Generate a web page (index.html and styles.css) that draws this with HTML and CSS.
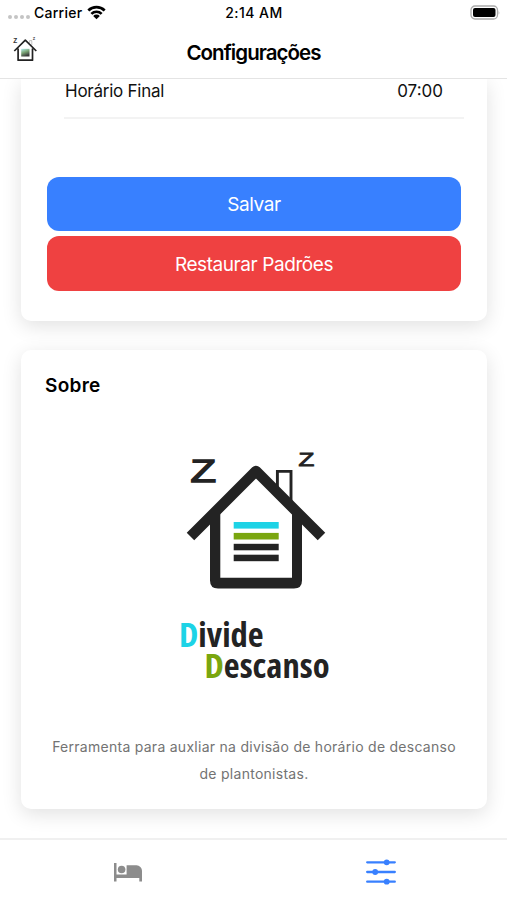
FILE: index.html
```html
<!DOCTYPE html>
<html lang="pt-BR">
<head>
    <meta charset="UTF-8">
    <meta name="viewport" content="width=device-width, initial-scale=1.0">
    <title>Configurações - Divide Descanso</title>
    <link rel="stylesheet" href="styles.css">
</head>
<body>
    <header class="header">
        <div class="status">
            <div class="carrier">
                <span class="signal"><i></i><i></i><i></i><i></i></span>
                <span class="carrier-name">Carrier</span>
                <svg class="wifi" width="19" height="15" viewBox="0 0 20 15">
                    <g fill="none" stroke="#000" stroke-width="2.8">
                        <path d="M1.4 5.4a12.3 12.3 0 0 1 17.2 0"/>
                        <path d="M4.6 8.9a7.7 7.7 0 0 1 10.8 0"/>
                    </g>
                    <path d="M10 14.6 6.5 11.2a4.9 4.9 0 0 1 7 0z"/>
                </svg>
            </div>
            <span class="time">2:14 AM</span>
            <svg class="battery" width="30" height="16" viewBox="0 0 30 16">
                <rect x="1" y="1" width="26.5" height="13" rx="4" fill="#fff" stroke="#aaa" stroke-width="1.3"/>
                <rect x="3" y="3" width="22.5" height="9" rx="2"/>
                <path d="M28.6 5.5q1.4 2 0 4z" fill="#aaa"/>
            </svg>
        </div>
        <div class="toolbar">
            <svg class="mini-logo" width="26" height="26" viewBox="0 0 26 26">
                <defs>
                    <linearGradient id="mini" x1="0" y1="0" x2="0.4" y2="1">
                        <stop offset="0" stop-color="#b5eef2"/>
                        <stop offset=".5" stop-color="#7da878"/>
                        <stop offset="1" stop-color="#3c3c3c"/>
                    </linearGradient>
                </defs>
                <text class="mini-zed" x="1.2" y="6.5" font-size="6.5">Z</text>
                <text class="mini-zed" x="20.8" y="4" font-size="4">Z</text>
                <path d="M17.6 7V4.6h2.2V9" fill="none" stroke="#999" stroke-width=".6"/>
                <path d="M2.3 15 13.3 4.2l11 10.8M6.1 12.5v11.7H20.5V12.5" fill="none" stroke="#222" stroke-width="1.7" stroke-linejoin="round"/>
                <rect x="9.2" y="12.8" width="8.3" height="7.7" fill="url(#mini)"/>
            </svg>
            <h1 class="title">Configurações</h1>
        </div>
    </header>

    <main class="content">
        <section class="card card-form">
            <div class="item">
                <span class="item-label">Horário Final</span>
                <span class="item-value">07:00</span>
            </div>
            <div class="buttons">
                <button class="btn btn-primary">Salvar</button>
                <button class="btn btn-danger">Restaurar Padrões</button>
            </div>
        </section>

        <section class="card card-about">
            <h2 class="about-title">Sobre</h2>
            <div class="logo">
                <svg class="logo-house" width="180" height="160" viewBox="0 0 180 160">
                    <text class="zed" x="25.4" y="41.5" font-size="31" textLength="25.6" lengthAdjust="spacingAndGlyphs">Z</text>
                    <text class="zed zed-small" x="133.5" y="25.5" font-size="18.8" textLength="15.8" lengthAdjust="spacingAndGlyphs">Z</text>
                    <!-- casa -->
                    <path d="M112.4 50V31.4H126V63" fill="none" stroke="#232323" stroke-width="2.9"/>
                    <path d="M25.5 96.6 91 31l65.5 65.6" fill="none" stroke="#232323" stroke-width="10.6" stroke-linejoin="round"/>
                    <path d="M45 74h10.3v63.8H127V74h10v66.5q0 8-8 8H53q-8 0-8-8z" fill="#232323"/>
                    <!-- listras -->
                    <rect x="68.7" y="82" width="45" height="6.6" fill="#1dd3e6"/>
                    <rect x="68.7" y="92.9" width="45" height="6.6" fill="#7aa60f"/>
                    <rect x="68.7" y="103.8" width="45" height="6.5" fill="#232323"/>
                    <rect x="68.7" y="114.7" width="45" height="6.5" fill="#232323"/>
                </svg>
                <div class="brand">
                    <div class="brand-line"><span class="cyan">D</span>ivide</div>
                    <div class="brand-line brand-second"><span class="green">D</span>escanso</div>
                </div>
            </div>
            <p class="about-text">Ferramenta para auxliar na divisão de horário de descanso de plantonistas.</p>
        </section>
    </main>

    <nav class="tabs">
        <a class="tab">
            <svg class="icon-bed" width="28" height="19" viewBox="0 0 28 19" fill="#8c8c8c">
                <path d="M0 0h2.5v11.5H12.6V2.3H22.5a5.5 5.5 0 0 1 5.5 5.5V18.5H25.3V15H2.5v3.500H0z"/>
                <circle cx="7.6" cy="6.5" r="3.8"/>
            </svg>
        </a>
        <a class="tab">
            <svg class="icon-options" width="30" height="26" viewBox="0 0 30 26" fill="#3880ff">
                <path d="M1.2 3.3h27.6M1.2 13h27.6M1.2 22.7h27.6" stroke="#3880ff" stroke-width="2.3" stroke-linecap="round"/>
                <circle cx="20.7" cy="3.3" r="2.9"/>
                <circle cx="9.2" cy="13" r="2.9"/>
                <circle cx="20.7" cy="22.7" r="2.9"/>
            </svg>
        </a>
    </nav>
</body>
</html>
```
FILE: styles.css
```css
* {
    box-sizing: border-box;
}
body {
    margin: 0;
    height: 900px;
    display: flex;
    flex-direction: column;
    overflow: hidden;
    background: #fff;
    color: #000;
    font-family: Inter, "Liberation Sans", sans-serif;
}
.header {
    height: 79px;
    flex: none;
    background: #fff;
    border-bottom: 1px solid #e4e4e4;
    z-index: 1;
}
.status {
    display: grid;
    grid-template-columns: 1fr auto 1fr;
    align-items: center;
    height: 26px;
    padding: 0 7px 0 8px;
    font-size: 14px;
    line-height: 17px;
    font-weight: 500;
}
.carrier {
    display: flex;
    align-items: center;
    letter-spacing: 0.25px;
}
.time {
    margin-bottom: 1px;
    letter-spacing: 0.45px;
}
.carrier-name {
    margin-bottom: 1px;
}
.signal {
    display: flex;
    gap: 2px;
    width: 26px;
    padding-top: 8px;
}
.signal i {
    width: 4px;
    height: 4px;
    border-radius: 50%;
    background: #c4c4c4;
}
.wifi {
    margin-left: 5px;
    margin-bottom: 1px;
}
.battery {
    justify-self: end;
}
.toolbar {
    display: grid;
    grid-template-columns: 1fr auto 1fr;
    align-items: center;
    height: 52px;
    padding: 0 12px;
}
.mini-logo {
    margin-bottom: 6px;
}
.title {
    margin: 0;
    font-size: 20.5px;
    font-weight: 600;
    letter-spacing: -0.95px;
}
.content {
    flex: 1;
    min-height: 0;
    overflow: hidden;
    padding: 0 20px 0 21px;
}
.card {
    border-radius: 10px;
    background: #fff;
    box-shadow: 0 5px 20px rgba(0, 0, 0, 0.12);
}
.card-form {
    height: 242px;
    border-radius: 0 0 10px 10px;
    padding: 0 26px;
}
.item {
    display: flex;
    justify-content: space-between;
    height: 40px;
    margin: 0 -3px 0 17px;
    padding: 1px 21px 0 0;
    border-bottom: 2px solid #f3f3f3;
    font-size: 17px;
    line-height: 22px;
    color: #111;
}
.item-label {
    padding-left: 1px;
    letter-spacing: -0.25px;
}
.buttons {
    display: flex;
    flex-direction: column;
    gap: 5px;
    padding-top: 57.6px;
}
.btn {
    height: 54.7px;
    padding: 2px 6px 0;
    border: none;
    border-radius: 12px;
    color: #fff;
    font-family: inherit;
    font-size: 19px;
    letter-spacing: -0.42px;
}
.btn-primary {
    background: #3880ff;
}
.btn-danger {
    background: #ef4141;
}
.card-about {
    height: 459px;
    margin-top: 29px;
    padding: 24px 24px 0;
}
.about-title {
    margin: 0;
    font-size: 19px;
    line-height: 24px;
    font-weight: 600;
    letter-spacing: 0.3px;
}
.logo {
    width: 180px;
    height: 250px;
    margin: 42px 0 0 120px;
}
.logo-house {
    display: block;
}
.zed {
    font-family: "Liberation Sans", sans-serif;
    fill: #232323;
    stroke: #232323;
    stroke-width: 1.4px;
}
.zed-small {
    stroke-width: 0.9px;
}
.mini-zed {
    font-family: "Liberation Sans", sans-serif;
    font-weight: bold;
    fill: #333;
}
.brand {
    padding: 18px 0 0 14px;
    font-family: "Open Sans", sans-serif;
    font-size: 34.6px;
    line-height: 31px;
    font-weight: 700;
    font-stretch: 75%;
    color: #232323;
}
.brand-line {
    white-space: nowrap;
}
.brand-second {
    padding-left: 25.5px;
}
.cyan {
    color: #1dd3e6;
}
.green {
    color: #7aa60f;
}
.about-text {
    margin: 43px 0 0;
    text-align: center;
    font-size: 14px;
    line-height: 27px;
    letter-spacing: 0.27px;
    color: #737373;
}
.tabs {
    display: grid;
    grid-template-columns: 1fr 1fr;
    flex: none;
    height: 62px;
    background: #fff;
    border-top: 2px solid #f0f0f0;
    z-index: 1;
}
.tab {
    display: flex;
    align-items: center;
    justify-content: center;
    padding: 4px 0 0 2px;
}
```
